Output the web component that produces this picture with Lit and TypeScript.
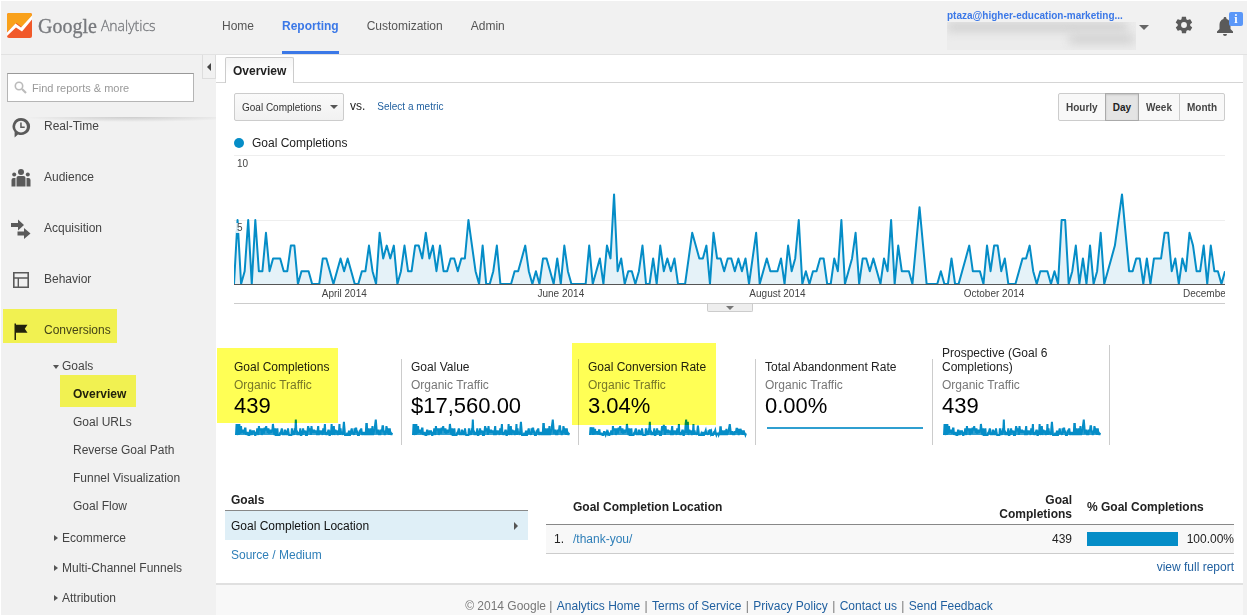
import { LitElement, html, css, svg } from "lit";
import { customElement, property } from "lit/decorators.js";
import { classMap } from "lit/directives/class-map.js";
import { styleMap } from "lit/directives/style-map.js";

// Daily goal completions, one digit per day.
const DAILY =
  "0501505114" + "1222113301" + "1100022101" + "2121001131" + "0423230131" + "1332423131" + "1221225310" +
  "3001300001" + "1231010221" + "0203100000" + "3012032712" + "0110130020" + "3121200024" + "3223042212" +
  "2121202401" + "2111203125" + "0101122002" + "1501240221" + "2102150311" + "1036300001" + "0020012311" +
  "1031331200" + "0122310111" + "0105501302" + "0301401235" + "7411220202" + "2244120214" + "3113031101";
const completions = [...DAILY].map(Number);

// Daily conversion rate, same period.
const rate = completions.map((v, i) => {
  const damp = i > 185 ? 0.7 : i < 40 ? 0.7 : 1;
  const spike = i === 2 || i === 107 || i === 132 || i === 175 ? 2.6 : 0;
  return i === 172 ? 7 : Math.min(6, v * damp + spike);
});

const linePath = (data: number[], height: number, max: number) =>
  data.map((v, i) => `${i ? "L" : "M"}${i} ${(height - (v * height) / max).toFixed(2)}`).join("");

@customElement("trend-chart")
class TrendChart extends LitElement {
  static styles = css`
    :host { display: block; color: #444; font-size: 10px; }
    .plot { position: relative; height: 129px; border-top: 1px solid #eee; }
    .mid { position: absolute; left: 0; right: 0; top: 64px; height: 1px; background: #eee; }
    .tick { position: absolute; left: 2px; padding: 0 1px; line-height: 10px; background: rgba(255, 255, 255, 0.85); }
    .t10 { top: 3px; }
    .t5 { top: 67px; }
    svg { position: absolute; inset: 0; width: 100%; height: 128px; }
    .area { fill: #e5f2f8; }
    .line { fill: none; stroke: #058dc7; stroke-width: 2; stroke-linejoin: round; vector-effect: non-scaling-stroke; }
    .base { position: absolute; left: 0; right: 0; bottom: 0; height: 1px; background: #555; }
    .months { display: flex; overflow: hidden; padding-left: 2px; line-height: 18px; border-bottom: 1px solid #ccc; }
    .month { flex: 0 0 21.9%; text-align: center; white-space: nowrap; }
    .month:last-child { padding-left: 8px; }
    .handle { display: flex; justify-content: center; height: 8px; }
    .handle button { width: 46px; padding: 0; border: 1px solid #ccc; border-top: 0; background: #eee; height: 8px; border-radius: 0 0 2px 2px; display: flex; justify-content: center; align-items: center; }
    .caret { border: 4px solid transparent; border-top-color: #777; border-bottom: 0; }
  `;
  render() {
    const d = linePath(completions, 128, 10);
    const last = completions.length - 1;
    return html`
      <div class="plot">
        <div class="mid"></div>
        <svg viewBox="0 0 ${last} 128" preserveAspectRatio="none" role="img" aria-label="Goal Completions per day">
          <path class="area" d="${d}L${last} 128L0 128Z"></path>
        </svg>
        <div class="base"></div>
        <svg viewBox="0 0 ${last} 128" preserveAspectRatio="none" aria-hidden="true">
          <path class="line" d=${d}></path>
        </svg>
        <span class="tick t10">10</span>
        <span class="tick t5">5</span>
      </div>
      <div class="months">
        ${["April 2014", "June 2014", "August 2014", "October 2014", "December 2014"].map(
          (m) => html`<span class="month">${m}</span>`
        )}
      </div>
      <div class="handle"><button aria-label="Show annotations"><span class="caret"></span></button></div>
    `;
  }
}

@customElement("spark-line")
class SparkLine extends LitElement {
  @property({ attribute: false }) data: number[] | null = null;
  static styles = css`
    :host { display: block; height: 17px; }
    svg { display: block; width: 100%; height: 17px; overflow: visible; }
    .fill { fill: #2f9fd0; }
    .line { fill: none; stroke: #058dc7; stroke-width: 2; vector-effect: non-scaling-stroke; }
    .thin { stroke: #2f9fd0; }
  `;
  render() {
    if (!this.data)
      return html`<svg viewBox="0 0 10 17" preserveAspectRatio="none"><path class="line thin" d="M0 8H10"></path></svg>`;
    const last = this.data.length - 1;
    const d = linePath(this.data, 15, 6.8);
    return html`<svg viewBox="0 0 ${last} 17" preserveAspectRatio="none">
      <path class="fill" d="${d}L${last} 15L0 15Z"></path>
      <path class="line" d=${d}></path>
    </svg>`;
  }
}

const icons = {
  realtime: svg`<path fill-rule="evenodd" d="M10 1a9 8.500 0 1 1-3 16.500L3.600 20.500V15A8.600 8.500 0 0 1 10 1Zm0 2.800a5.900 5.900 0 1 0 0 11.800a5.900 5.900 0 1 0 0-11.800Z"></path><path d="M9.200 5.500h1.500v4h3v1.500H9.200Z"></path>`,
  audience: svg`<circle cx="10" cy="4" r="3"></circle><circle cx="3.200" cy="6.500" r="2"></circle><circle cx="16.800" cy="6.500" r="2"></circle><path d="M5.500 18.500V10q0-2 2-2h5q2 0 2 2v8.500ZM.500 18.500V12q0-2 2-2h2v8.500ZM15.500 18.500V10h2q2 0 2 2v6.500Z"></path>`,
  acquisition: svg`<path d="M0 4h7V.500l6 5.500-6 5.500V8H0ZM6.500 12.500H13V9l6.500 5.500L13 20v-3.500H6.500Z"></path>`,
  behavior: svg`<path fill-rule="evenodd" d="M2 2h16v16H2ZM3.600 3.600v3.600h12.800V3.600ZM3.600 8.800v7.600h3V8.800ZM8 8.800v7.600h8.400V8.800Z"></path>`,
  conversions: svg`<path fill="#222" d="M3.500 2.500H5v1.200h11.500l-2.700 4 2.700 4H5V19H3.500Z"></path>`,
};

@customElement("app-root")
class AppRoot extends LitElement {
  static styles = css`
    :host {
      display: flex; flex-direction: column; box-sizing: border-box; min-height: 100vh; padding: 1px 1px 0;
      font: 12px/14px "Liberation Sans", Arial, sans-serif; color: #222; background: #fff;
    }
    * { box-sizing: border-box; }
    a { color: #1f5f9f; text-decoration: none; }
    button, select, input { font-family: inherit; margin: 0; }
    ul { list-style: none; margin: 0; padding: 0; }

    header { display: flex; align-items: stretch; height: 54px; background: #f1f1f1; border-bottom: 1px solid #e2e2e2; }
    .brand { display: flex; align-items: center; width: 221px; padding: 0 0 4px 6px; color: #77797d; }
    .brand svg { width: 25px; height: 25px; margin-right: 6px; }
    .google { font: 20px/26px "Liberation Serif", serif; -webkit-text-stroke: 0.3px #77797d; }
    .product { font: 300 14px/26px "Open Sans", sans-serif; margin-left: 4px; -webkit-text-stroke: 0.3px #77797d; }
    .nav { display: flex; gap: 28px; }
    .nav a { display: flex; align-items: center; color: #555; padding-bottom: 3px; }
    .nav a.on { color: #3b78e7; font-weight: bold; border-bottom: 3px solid #3b78e7; padding-bottom: 0; }
    .tools { display: flex; align-items: flex-start; margin-left: auto; padding-right: 5px; }
    .user { display: flex; align-items: flex-start; width: 202px; padding: 0; border: 0; background: none; color: #3b78e7; font-size: 10px; font-weight: bold; line-height: 12px; text-align: left; margin-top: 9px; }
    .account { flex: 1; }
    .smudge { display: block; height: 28px; overflow: hidden; background: #ececec; width: 189px; }
    .s1, .s2 { display: block; height: 10px; background: #d2d2d2; filter: blur(5px); }
    .s1 { width: 180px; }
    .s2 { width: 65px; margin: 2px 0 0 122px; }
    .caret { display: block; width: 9px; height: 5px; border: 5px solid transparent; border-top-color: #666; border-bottom: 0; margin-top: 15px; }
    .tool { padding: 0; border: 0; background: none; position: relative; height: 20px; margin-top: 14px; }
    .tool svg { display: block; fill: #5a5a5a; }
    .gear { margin-left: 25px; }
    .bell { margin-left: 21px; width: 27px; }
    .badge { position: absolute; left: 14px; top: -3px; width: 14px; height: 14px; border-radius: 2px; background: #5a97f8; color: #fff; font: bold 12px/14px "Liberation Serif", serif; text-align: center; }

    .body { flex: 1; display: flex; background: #f1f1f1; }
    aside { flex: 0 0 215px; position: relative; color: #444; }
    .find { position: relative; z-index: 1; height: 63px; padding: 18px 22px 0 6px; background: #f1f1f1; }
    .find::after { content: ""; position: absolute; left: 0; right: 0; bottom: -4px; height: 5px; background: radial-gradient(ellipse 50% 100% at 60% 0, #ccc, rgba(241, 241, 241, 0)); }
    .find label { display: flex; align-items: center; height: 29px; border: 1px solid #b5b5b5; border-top-color: #999; background: #fff; padding: 0 6px; }
    .find input { flex: 1; min-width: 0; border: 0; outline: 0; padding: 0 0 0 5px; font-size: 11px; background: none; }
    .find input::placeholder { color: #999; opacity: 1; }
    .collapse { position: absolute; z-index: 2; right: 0; top: 0; width: 14px; height: 24px; padding: 0; border: 1px solid #ddd; border-top: 0; background: #f1f1f1; display: flex; align-items: center; justify-content: center; }
    .collapse span { border: 4px solid transparent; border-right-color: #444; border-left: 0; }
    .menu { margin-top: -18px; }
    .menu > li > a { display: flex; align-items: center; height: 51px; padding-left: 10px; color: #444; }
    .menu svg { width: 20px; height: 21px; margin: 3px 13px 0 0; fill: #5a5a5a; }
    .group { display: flex; align-items: center; height: 30px; padding-left: 51px; color: #444; }
    .group::before { content: ""; width: 0; margin: 0 4px 0 2px; border: 3px solid transparent; border-left: 4px solid #555; border-right: 0; }
    .group.open { height: 22px; }
    .group.open::before { margin: 2px 3px 0 1px; border: 3px solid transparent; border-top: 4px solid #555; border-bottom: 0; }
    .leaves { padding: 3px 0; }
    .leaves a { display: flex; align-items: center; height: 28px; padding-left: 72px; color: #444; }
    .leaves a.on { font-weight: bold; color: #222; }
    .mark { position: relative; }
    .mark::after { content: ""; position: absolute; background: #ffff55; mix-blend-mode: multiply; pointer-events: none; }
    .m-conv::after { left: 2px; top: 5px; width: 114px; height: 34px; }
    .m-over::after { left: 59px; top: -5px; width: 76px; height: 32px; }
    .m-goal::after { left: -8px; top: -11px; width: 121px; height: 75px; }
    .m-rate::after { left: -7px; top: -16px; width: 144px; height: 82px; }

    main { flex: 1; min-width: 0; display: flex; flex-direction: column; background: #fff; margin-right: 4px; }
    .tabs { display: flex; height: 28px; padding: 2px 0 0 9px; border-bottom: 1px solid #d5d5d5; }
    .tabs button { height: 26px; padding: 0 7px; border: 1px solid #ccc; border-bottom: 0; border-radius: 2px 2px 0 0; background: linear-gradient(#f5f5f5, #fff 70%); font-size: 12px; font-weight: bold; color: #222; }
    .content { padding: 10px 18px 0; }
    .controls { display: flex; align-items: center; }
    .pick { position: relative; display: block; }
    .pick select { appearance: none; width: 110px; height: 28px; padding: 0 7px; border: 1px solid #ccc; border-radius: 2px; background: linear-gradient(#fafafa, #f1f1f1); font-size: 10px; color: #333; }
    .pick span { position: absolute; right: 6px; top: 12px; border: 4px solid transparent; border-top-color: #555; border-bottom: 0; pointer-events: none; }
    .vs { margin: 0 12px 2px 6px; }
    .metric { font-size: 10px; }
    .span { display: flex; margin-left: auto; }
    .span button { height: 28px; padding: 0 7px; border: 1px solid #ccc; margin-left: -1px; background: #f8f8f8; font-size: 10px; font-weight: bold; color: #444; }
    .span button:first-child { border-radius: 2px 0 0 2px; }
    .span button:last-child { border-radius: 0 2px 2px 0; }
    .span button.on { background: #e4e4e4; border-color: #aaa; box-shadow: inset 0 1px 2px rgba(0, 0, 0, 0.15); color: #222; z-index: 1; }
    .legend { display: flex; align-items: center; gap: 8px; height: 34px; padding-top: 10px; line-height: 14px; }
    .legend i { width: 10px; height: 10px; border-radius: 50%; background: #058dc7; }
    .kpis { display: flex; align-items: flex-end; padding: 33px 9px 0; }
    .kpi { flex: 0 1 177px; padding: 1px 9px 8px; border-right: 1px solid #ccc; }
    .kpi small { display: block; margin-top: 4px; font-size: 12px; line-height: 15px; color: #777; }
    .kpi b { display: block; margin-bottom: 2px; font-weight: normal; font-size: 22px; line-height: 25px; color: #000; }
    .kpi spark-line { margin-left: 2px; }

    .tables { display: flex; gap: 18px; padding: 45px 9px 0; }
    .dims { flex: 0 0 303px; }
    .dims h2 { margin: 0; padding: 3px 6px 2px; font-size: 12px; line-height: 15px; border-bottom: 1px solid #888; }
    .dims a { display: flex; align-items: center; justify-content: space-between; height: 29px; padding: 0 10px 0 6px; color: #2f7fb8; }
    .dims a.on { background: #dfeff7; color: #111; }
    .dims a.on::after { content: ""; border: 4px solid transparent; border-left-color: #555; border-right: 0; }
    .result { flex: 1; text-align: right; }
    table { width: 100%; border-collapse: collapse; text-align: left; }
    th { padding: 2px 0; height: 34px; border-bottom: 1px solid #888; vertical-align: middle; }
    td { height: 29px; padding: 0; background: #f8f8f8; border-bottom: 1px solid #ccc; }
    .idx { width: 27px; padding-left: 8px; }
    .num { width: 90px; text-align: right; }
    .pct { width: 162px; padding-left: 15px; }
    .share { display: flex; align-items: center; justify-content: space-between; }
    .track { width: 91px; }
    .bar { display: block; height: 14px; background: #058dc7; }
    .full { display: block; padding: 6px 0 9px; }
    .row { color: #2f7fb8; }
    footer { flex: 1; padding: 14px 0 9px; border-top: 2px solid #e0e0e0; background: #f8f8f8; text-align: center; color: #777; }
    footer a { margin: 0 1px; }
  `;

  private kpi(label: string, value: string, data: number[] | null, mark = "") {
    return html`<div class=${classMap({ kpi: true, mark: !!mark, ...(mark ? { [mark]: true } : {}) })}>
      ${label}<small>Organic Traffic</small><b>${value}</b>
      <spark-line .data=${data}></spark-line>
    </div>`;
  }

  private section(name: string, icon: unknown, mark = "") {
    return html`<li class=${mark}><a href="#"><svg viewBox="0 0 20 21" aria-hidden="true">${icon}</svg>${name}</a></li>`;
  }

  render() {
    return html`
      <header>
        <div class="brand">
          <svg viewBox="0 0 25 25" aria-hidden="true">
            <rect width="25" height="25" rx="2" fill="#f1592a"></rect>
            <path d="M2 0H23Q25 0 25 2V3L15.500 14.500 9.500 10 0 19V2Q0 0 2 0Z" fill="#f9a11b"></path>
            <path d="M0 19.500 8.500 10.500 14 14.500 25 2.500V6.500L15 18.500 9 14.500 0 23Z" fill="#fff"></path>
          </svg>
          <span class="google">Google</span><span class="product">Analytics</span>
        </div>
        <nav class="nav">
          <a href="#">Home</a><a href="#" class="on">Reporting</a><a href="#">Customization</a><a href="#">Admin</a>
        </nav>
        <div class="tools">
          <button class="user">
            <span class="account">ptaza@higher-education-marketing...
              <span class="smudge"><span class="s1"></span><span class="s2"></span></span></span>
            <span class="caret"></span>
          </button>
          <button class="tool gear" aria-label="Settings">
            <svg width="20" height="20" viewBox="0 0 24 24"><path d="M19.400 13c.1-.3.1-.700.1-1s0-.700-.1-1l2.100-1.600c.2-.2.200-.400.100-.600l-2-3.500c-.1-.2-.4-.3-.6-.2l-2.500 1c-.5-.4-1.100-.700-1.700-1l-.4-2.600c0-.2-.2-.4-.5-.4h-4c-.2 0-.5.2-.5.4l-.4 2.600c-.6.3-1.200.6-1.700 1l-2.500-1c-.2-.1-.5 0-.6.2l-2 3.500c-.1.2-.1.500.1.600L4.500 11c0 .3-.1.700-.1 1s0 .700.1 1l-2.100 1.600c-.2.2-.2.400-.1.600l2 3.500c.1.2.4.3.6.2l2.500-1c.5.4 1.100.700 1.700 1l.4 2.600c0 .2.2.4.5.4h4c.2 0 .5-.2.5-.4l.4-2.600c.6-.3 1.200-.6 1.700-1l2.500 1c.2.1.5 0 .6-.2l2-3.500c.1-.2.1-.500-.1-.600ZM12 15.500a3.500 3.500 0 1 1 0-7 3.500 3.500 0 0 1 0 7Z"></path></svg>
          </button>
          <button class="tool bell" aria-label="Notifications">
            <svg width="20" height="22" viewBox="0 0 20 22"><path d="M10 2c-1 0-1.500.7-1.500 1.500v.4C5.800 4.600 4.500 7 4.500 9.700V14L2 16.500V18h16v-1.500L15.500 14V9.700c0-2.700-1.300-5.100-4-5.800v-.4C11.500 2.700 11 2 10 2ZM8 19a2 2 0 0 0 4 0Z"></path></svg>
            <span class="badge">i</span>
          </button>
        </div>
      </header>
      <div class="body">
        <aside>
          <button class="collapse" aria-label="Collapse menu"><span></span></button>
          <div class="find">
            <label>
              <svg width="13" height="13" viewBox="0 0 13 13" aria-hidden="true"><circle cx="5" cy="5" r="3.700" fill="none" stroke="#bbb" stroke-width="1.600"></circle><path d="M8 8 12 12" stroke="#bbb" stroke-width="2.200"></path></svg>
              <input type="text" placeholder="Find reports &amp; more" aria-label="Find reports &amp; more" />
            </label>
          </div>
          <ul class="menu">
            ${this.section("Real-Time", icons.realtime)}
            ${this.section("Audience", icons.audience)}
            ${this.section("Acquisition", icons.acquisition)}
            ${this.section("Behavior", icons.behavior)}
            ${this.section("Conversions", icons.conversions, "mark m-conv")}
          </ul>
          <a href="#" class="group open">Goals</a>
          <ul class="leaves">
            <li class="mark m-over"><a href="#" class="on">Overview</a></li>
            ${["Goal URLs", "Reverse Goal Path", "Funnel Visualization", "Goal Flow"].map(
              (t) => html`<li><a href="#">${t}</a></li>`
            )}
          </ul>
          ${["Ecommerce", "Multi-Channel Funnels", "Attribution"].map((t) => html`<a href="#" class="group">${t}</a>`)}
        </aside>
        <main>
          <div class="tabs"><button>Overview</button></div>
          <div class="content">
            <div class="controls">
              <label class="pick"><select aria-label="Metric"><option>Goal Completions</option></select><span></span></label>
              <span class="vs">vs.</span>
              <a href="#" class="metric">Select a metric</a>
              <div class="span">
                ${["Hourly", "Day", "Week", "Month"].map(
                  (t) => html`<button class=${classMap({ on: t === "Day" })}>${t}</button>`
                )}
              </div>
            </div>
            <div class="legend"><i></i>Goal Completions</div>
            <trend-chart></trend-chart>
          </div>
          <div class="kpis">
            ${this.kpi("Goal Completions", "439", completions, "m-goal")}
            ${this.kpi("Goal Value", "$17,560.00", completions)}
            ${this.kpi("Goal Conversion Rate", "3.04%", rate, "m-rate")}
            ${this.kpi("Total Abandonment Rate", "0.00%", null)}
            ${this.kpi("Prospective (Goal 6 Completions)", "439", completions)}
          </div>
          <div class="tables">
            <div class="dims">
              <h2>Goals</h2>
              <a href="#" class="on">Goal Completion Location</a>
              <a href="#">Source / Medium</a>
            </div>
            <div class="result">
              <table>
                <thead>
                  <tr><th class="idx"></th><th>Goal Completion Location</th><th class="num">Goal Completions</th><th class="pct">% Goal Completions</th></tr>
                </thead>
                <tbody>
                  <tr>
                    <td class="idx">1.</td>
                    <td><a href="#" class="row">/thank-you/</a></td>
                    <td class="num">439</td>
                    <td class="pct"><div class="share"><span class="track"><span class="bar" style=${styleMap({ width: "100%" })}></span></span>100.00%</div></td>
                  </tr>
                </tbody>
              </table>
              <a href="#" class="full">view full report</a>
            </div>
          </div>
          <footer>
            © 2014 Google | <a href="#">Analytics Home</a> | <a href="#">Terms of Service</a> | <a href="#">Privacy Policy</a> |
            <a href="#">Contact us</a> | <a href="#">Send Feedback</a>
          </footer>
        </main>
      </div>
    `;
  }
}
